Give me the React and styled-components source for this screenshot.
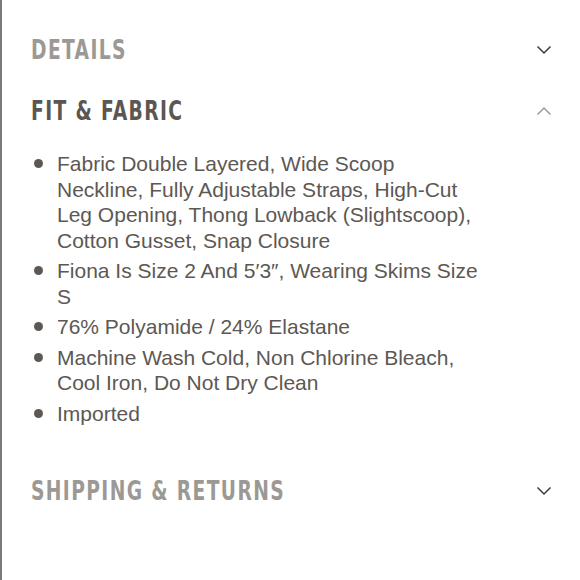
import React from 'react';
import styled, { createGlobalStyle } from 'styled-components';

const GlobalStyle = createGlobalStyle`
    html, body {
        margin: 0;
        padding: 0;
        background: #ffffff;
    }
`;

const Page = styled.div`
    width: 580px;
    height: 580px;
    box-sizing: border-box;
    border-left: 2px solid #7a7a7a;
    padding: 19px 28px 0 29px;
    background: #ffffff;
`;

const Section = styled.div`
    display: flex;
    flex-direction: column;
`;

const Header = styled.div`
    height: 61px;
    display: flex;
    flex-direction: row;
    align-items: center;
    justify-content: space-between;
`;

const Title = styled.h2`
    margin: 0;
    font-family: 'DejaVu Sans Condensed', 'Liberation Sans', sans-serif;
    font-weight: 700;
    font-size: 26px;
    letter-spacing: 1.7px;
    transform: scaleX(0.8);
    transform-origin: left center;
    white-space: nowrap;
    color: ${(p) => (p.$open ? '#5b5651' : '#9c9994')};
`;

const List = styled.ul`
    list-style: none;
    margin: 10px 0 34px 0;
    padding: 0;
    display: flex;
    flex-direction: column;
    gap: 5px;
    width: 454px;
`;

const Item = styled.li`
    display: flex;
    flex-direction: row;
    align-items: flex-start;
    font-family: 'Liberation Sans', Arial, sans-serif;
    font-size: 21px;
    line-height: 25.5px;
    color: #5d5853;
`;

const Dot = styled.span`
    flex: none;
    width: 9px;
    height: 9px;
    border-radius: 50%;
    background: #5d5853;
    margin: 8px 14px 0 3px;
`;

const Chevron = ({ up }) => (
    <svg width="16" height="10" viewBox="0 0 16 10" fill="none">
        <path
            d={up ? 'M1.5 8.5 L8 2 L14.5 8.5' : 'M1.5 1.5 L8 8 L14.5 1.5'}
            stroke={up ? '#9a9a9a' : '#3c3c3c'}
            strokeWidth="1.5"
        />
    </svg>
);

const items = [
    'Fabric Double Layered, Wide Scoop Neckline, Fully Adjustable Straps, High-Cut Leg Opening, Thong Lowback (Slightscoop), Cotton Gusset, Snap Closure',
    'Fiona Is Size 2 And 5′3″, Wearing Skims Size S',
    '76% Polyamide / 24% Elastane',
    'Machine Wash Cold, Non Chlorine Bleach, Cool Iron, Do Not Dry Clean',
    'Imported',
];

const App = () => {
    return (
        <Page>
            <GlobalStyle />
            <Section>
                <Header>
                    <Title>DETAILS</Title>
                    <Chevron />
                </Header>
            </Section>
            <Section>
                <Header>
                    <Title $open>FIT &amp; FABRIC</Title>
                    <Chevron up />
                </Header>
                <List>
                    {items.map((text) => (
                        <Item key={text}>
                            <Dot />
                            <span>{text}</span>
                        </Item>
                    ))}
                </List>
            </Section>
            <Section>
                <Header>
                    <Title>SHIPPING &amp; RETURNS</Title>
                    <Chevron />
                </Header>
            </Section>
        </Page>
    );
};

export default App;
